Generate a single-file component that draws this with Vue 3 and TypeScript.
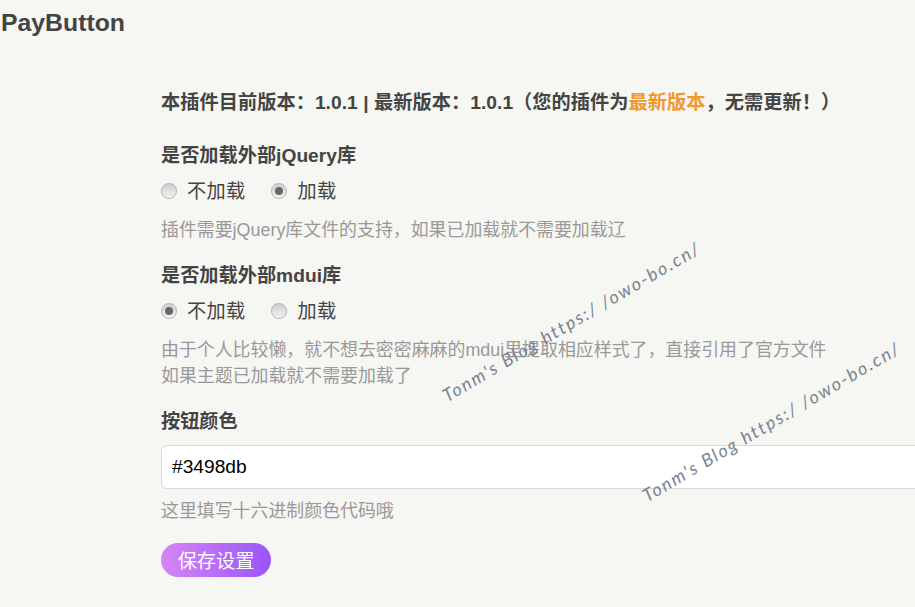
<script setup lang="ts">
const watermarks = [
  { id: 1, cls: 'wm-a' },
  { id: 2, cls: 'wm-b' },
]
</script>

<template>
  <div class="page">
    <h2 class="title">PayButton</h2>
    <form class="form" @submit.prevent>
      <p class="version">本插件目前版本：1.0.1 | 最新版本：1.0.1（您的插件为<span class="hl">最新版本</span>，无需更新！）</p>

      <div class="field f1">
        <div class="label">是否加载外部jQuery库</div>
        <div class="radios">
          <label class="radio"><span class="dot"></span>不加载</label>
          <label class="radio"><span class="dot on"></span>加载</label>
        </div>
        <p class="desc">插件需要jQuery库文件的支持，如果已加载就不需要加载辽</p>
      </div>

      <div class="field f2">
        <div class="label">是否加载外部mdui库</div>
        <div class="radios">
          <label class="radio"><span class="dot on"></span>不加载</label>
          <label class="radio"><span class="dot"></span>加载</label>
        </div>
        <p class="desc">由于个人比较懒，就不想去密密麻麻的mdui里提取相应样式了，直接引用了官方文件<br />如果主题已加载就不需要加载了</p>
      </div>

      <div class="field f3">
        <div class="label">按钮颜色</div>
        <input class="input" type="text" value="#3498db" />
        <p class="desc">这里填写十六进制颜色代码哦</p>
      </div>

      <button class="save" type="button">保存设置</button>
    </form>

    <div v-for="w in watermarks" :key="w.id" class="wm" :class="w.cls">Tonm's Blog https:/ /owo-bo.cn/</div>
  </div>
</template>

<style>
html, body { margin: 0; background: #f6f6f3; overflow: hidden; }
</style>

<style scoped>
.page {
  position: relative;
  width: 915px;
  height: 607px;
  overflow: hidden;
  background: #f6f6f3;
  color: #444;
  font-family: "Liberation Sans", "Noto Sans CJK SC", sans-serif;
  font-size: 19.2px;
}
.title {
  margin: 0;
  padding: 8px 0 0 1px;
  font-size: 24.8px;
  line-height: 30px;
  font-weight: 700;
  color: #444;
}
.form { padding: 52px 0 0 161px; }
.version { margin: 0; font-weight: 700; line-height: 26px; white-space: nowrap; letter-spacing: 0.05px; }
.hl { color: #f0982f; }
.field { display: flex; flex-direction: column; }
.f1 { margin-top: 27px; }
.f2 { margin-top: 20px; }
.f3 { margin-top: 20px; }
.label { font-weight: 700; line-height: 26px; white-space: nowrap; }
.radios { display: flex; gap: 26px; margin-top: 10px; height: 26px; }
.radio { display: flex; align-items: center; gap: 10px; line-height: 26px; letter-spacing: 0.3px; }
.dot {
  box-sizing: border-box;
  width: 16px;
  height: 16px;
  border-radius: 50%;
  border: 1px solid #b4b4b4;
  background: linear-gradient(#cfcfcf, #f2f2f2);
  display: flex;
  align-items: center;
  justify-content: center;
  margin-top: -2px;
}
.dot.on::after {
  content: "";
  width: 8px;
  height: 8px;
  border-radius: 50%;
  background: #666;
}
.desc { margin: 12px 0 0; font-size: 17.92px; line-height: 26px; color: #999; white-space: nowrap; }
.input {
  box-sizing: border-box;
  width: 800px;
  height: 44px;
  margin-top: 10px;
  padding: 0 10px;
  border: 1px solid #d9d9d9;
  border-radius: 6px;
  background: #fff;
  color: #000;
  font: 19.2px "Liberation Sans", sans-serif;
  outline: none;
}
.f3 .desc { margin-top: 9px; }
.save {
  display: block;
  width: 110px;
  height: 34px;
  margin-top: 19px;
  padding: 0;
  border: 0;
  border-radius: 17px;
  background: linear-gradient(90deg, #d585f6, #9a55fb);
  color: #fff;
  font: 19.2px "Liberation Sans", "Noto Sans CJK SC", sans-serif;
}
.wm {
  position: absolute;
  left: 0;
  top: 0;
  transform-origin: 0 0;
  white-space: nowrap;
  color: #778492;
  font-family: "Lato", sans-serif;
  font-style: italic;
  font-weight: 400;
  font-size: 18px;
  letter-spacing: 1.8px;
  pointer-events: none;
}
.wm-a { transform: translate(438px, 387px) rotate(-30.5deg); }
.wm-b { transform: translate(638px, 487px) rotate(-30.5deg); }
</style>
